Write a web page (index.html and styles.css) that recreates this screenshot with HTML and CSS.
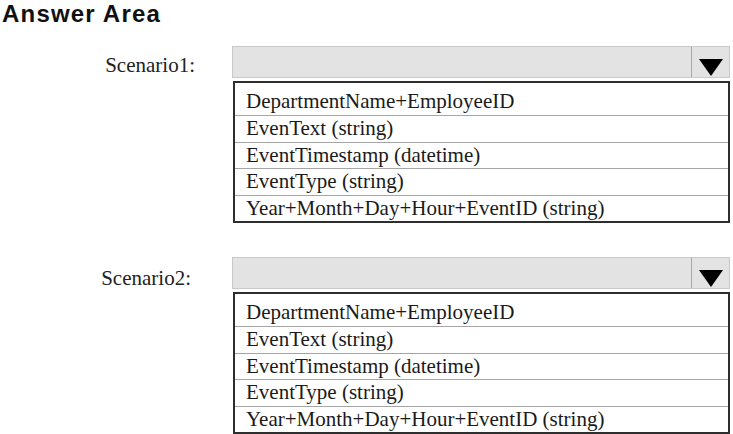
FILE: index.html
```html
<!DOCTYPE html>
<html lang="en">
<head>
    <meta charset="UTF-8">
    <meta name="viewport" content="width=device-width, initial-scale=1.0">
    <title>Answer Area</title>
    <link rel="stylesheet" href="styles.css">
</head>
<body>
    <h1 class="titulo">Answer Area</h1>

    <div class="questao questao-1">
        <label class="rotulo">Scenario1:</label>
        <div class="campo">
            <div class="seletor">
                <span class="seta">
                    <svg width="24" height="17" viewBox="0 0 24 17"><polygon points="0,0 24,0 12,17" fill="#000"/></svg>
                </span>
            </div>
            <ul class="opcoes">
                <li>DepartmentName+EmployeeID</li>
                <li>EvenText (string)</li>
                <li>EventTimestamp (datetime)</li>
                <li>EventType (string)</li>
                <li>Year+Month+Day+Hour+EventID (string)</li>
            </ul>
        </div>
    </div>

    <div class="questao questao-2">
        <label class="rotulo">Scenario2:</label>
        <div class="campo">
            <div class="seletor">
                <span class="seta">
                    <svg width="24" height="17" viewBox="0 0 24 17"><polygon points="0,0 24,0 12,17" fill="#000"/></svg>
                </span>
            </div>
            <ul class="opcoes">
                <li>DepartmentName+EmployeeID</li>
                <li>EvenText (string)</li>
                <li>EventTimestamp (datetime)</li>
                <li>EventType (string)</li>
                <li>Year+Month+Day+Hour+EventID (string)</li>
            </ul>
        </div>
    </div>
</body>
</html>
```

FILE: styles.css
```css
body {
    margin: 0;
    padding: 0;
    background-color: #fff;
    color: #1a1a1a;
    font-family: "Liberation Serif", "Times New Roman", serif;
}

.titulo {
    margin: 0 0 19px 2px;
    font-family: "Liberation Sans", Arial, sans-serif;
    font-size: 24px;
    line-height: 27px;
    letter-spacing: 1.2px;
    font-weight: bold;
    color: #111;
}

.questao {
    display: grid;
    grid-template-columns: 232px 498px;
}

.questao-2 {
    margin-top: 34px;
}

.rotulo {
    text-align: right;
    padding-right: 37px;
    padding-top: 7px;
    font-size: 21px;
    line-height: 24px;
    color: #222;
}

.questao-2 .rotulo {
    padding-top: 9px;
    padding-right: 41px;
}

.seletor {
    height: 30px;
    border: 1px solid #c9c9c9;
    background-color: #e3e3e3;
    display: flex;
    justify-content: flex-end;
}

.seta {
    width: 38px;
    border-left: 1px solid #a8a8a8;
    display: flex;
    align-items: center;
    justify-content: center;
    padding-top: 10px;
    box-sizing: border-box;
}

.seta svg {
    display: block;
}

.opcoes {
    list-style: none;
    margin: 3px 0 0 1px;
    padding: 0;
    border: 2px solid #2e2e2e;
}

.opcoes li {
    height: 26.5px;
    line-height: 24px;
    padding-left: 11px;
    font-size: 21px;
    border-top: 1px solid #a5a5a5;
    box-sizing: border-box;
}

.opcoes li:first-child {
    border-top: none;
    height: 32px;
    padding-top: 6px;
}
```
